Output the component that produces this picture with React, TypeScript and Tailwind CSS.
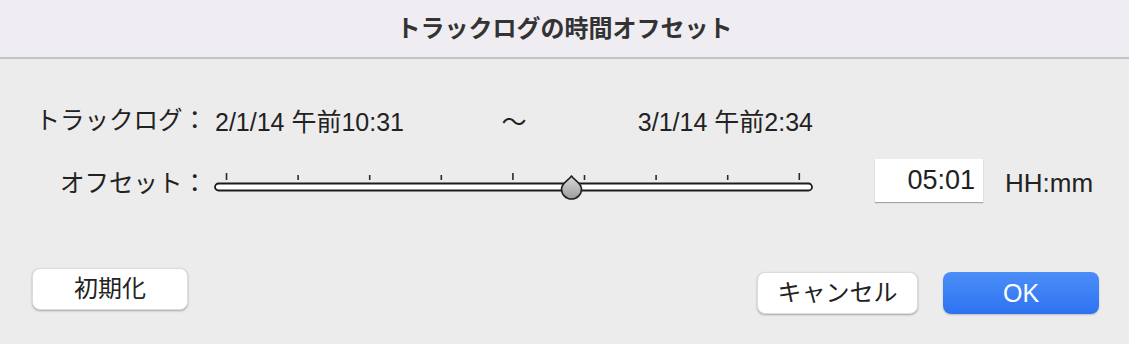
import React from "react";

const FONT = { fontFamily: '"Liberation Sans", "Noto Sans CJK JP", sans-serif' };

function Slider() {
  const ticks = Array.from({ length: 9 }, (_, i) => 12.5 + i * 71.6);
  return (
    <svg width="600" height="32" viewBox="0 0 600 32" className="block">
      <defs>
        <linearGradient id="thumb" x1="0" y1="0" x2="0" y2="1">
          <stop offset="0" stopColor="#d9d9d9" />
          <stop offset="1" stopColor="#9c9c9c" />
        </linearGradient>
      </defs>
      {ticks.map((x, i) => (
        <line
          key={i}
          x1={x}
          x2={x}
          y1={i % 4 === 0 ? 2 : 4}
          y2={9}
          stroke="#2a2a2a"
          strokeWidth="1.6"
        />
      ))}
      <rect x="1" y="12.5" width="597" height="7" rx="3.5" fill="#ffffff" stroke="#1c1c1c" strokeWidth="1.8" />
      <path
        d="M357.5 5 C360 9, 367.5 12, 367.5 18 A10 10 0 0 1 347.5 18 C347.5 12, 355 9, 357.5 5 Z"
        fill="url(#thumb)"
        stroke="#1f1f1f"
        strokeWidth="1.6"
        strokeLinejoin="round"
      />
    </svg>
  );
}

export default function App() {
  return (
    <div className="w-[1129px] h-[344px] bg-[#ececec] text-[#222222] overflow-hidden" style={FONT}>
      <div className="h-[59px] bg-[#efedf2] border-b-2 border-[#c4c4c4] flex items-center justify-center">
        <span className="text-[24px] font-bold text-[#333333] leading-none">トラックログの時間オフセット</span>
      </div>

      <div className="flex items-center pt-[45px] h-[34px] box-content">
        <div className="w-[207px] text-right text-[24.5px] leading-[34px]">トラックログ：</div>
        <div className="ml-[8px] w-[598px] grid grid-cols-3 text-[25px] leading-[34px] mt-[2px]">
          <span className="text-left whitespace-nowrap">2/1/14 午前10:31</span>
          <span className="text-center">〜</span>
          <span className="text-right whitespace-nowrap">3/1/14 午前2:34</span>
        </div>
      </div>

      <div className="flex items-start mt-[21px] h-[43px]">
        <div className="w-[207px] text-right text-[24.5px] leading-[34px] mt-[8px]">オフセット：</div>
        <div className="ml-[7px] mt-[12px]">
          <Slider />
        </div>
        <div className="ml-[61px] w-[108px] h-[43px] bg-white shadow-[0_1px_1px_rgba(0,0,0,0.3)] flex items-center justify-end pr-[8px] text-[27px] leading-none">
          05:01
        </div>
        <div className="ml-[22px] text-[26px] leading-[34px] mt-[7px]">HH:mm</div>
      </div>

      <div className="flex items-start mt-[66px]">
        <button className="ml-[32px] w-[156px] h-[42px] bg-white rounded-[8px] shadow-[0_1px_2px_rgba(0,0,0,0.3)] border border-[#dcdcdc] text-[24px] leading-none flex items-center justify-center">
          初期化
        </button>
        <button className="ml-auto mt-[4px] w-[161px] h-[42px] bg-white rounded-[8px] shadow-[0_1px_2px_rgba(0,0,0,0.3)] border border-[#dcdcdc] text-[24px] leading-none flex items-center justify-center">
          キャンセル
        </button>
        <button className="ml-[25px] mr-[30px] mt-[4px] w-[156px] h-[42px] rounded-[8px] bg-gradient-to-b from-[#4b8ef8] to-[#2f72f0] shadow-[0_1px_2px_rgba(0,0,0,0.2)] text-white text-[25px] leading-none flex items-center justify-center">
          OK
        </button>
      </div>
    </div>
  );
}
